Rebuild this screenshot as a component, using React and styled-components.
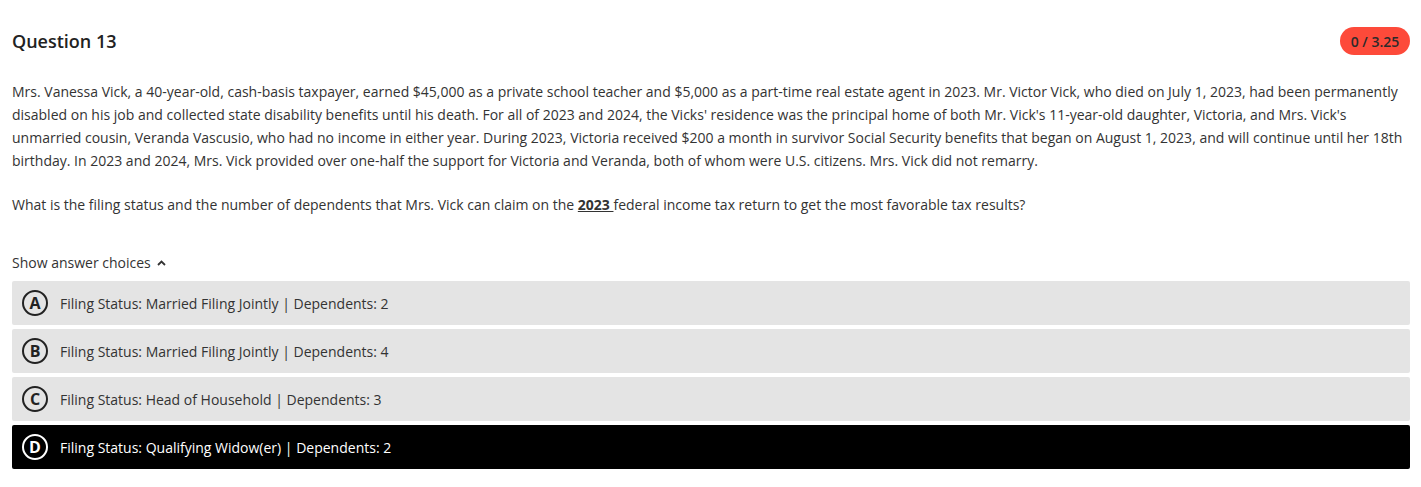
import React from 'react';
import styled, { createGlobalStyle } from 'styled-components';

const GlobalStyle = createGlobalStyle`
  body {
    margin: 0;
    background: #ffffff;
    font-family: 'Open Sans', 'Liberation Sans', sans-serif;
    color: #333333;
  }
`;

const Page = styled.div`
  padding: 27px 11px 0 12px;
`;

const HeaderRow = styled.div`
  display: flex;
  justify-content: space-between;
  align-items: center;
  height: 28px;
`;

const Title = styled.h2`
  margin: 0;
  font-size: 18px;
  font-weight: 600;
  color: #222222;
`;

const ScoreBadge = styled.span`
  display: inline-flex;
  align-items: center;
  justify-content: center;
  width: 70px;
  height: 28px;
  border-radius: 14px;
  background: #fd4a3a;
  color: #2b2b2b;
  font-size: 14px;
  font-weight: 600;
`;

const Paragraph = styled.p`
  margin: ${(p) => p.$top}px 0 0;
  font-size: 14px;
  line-height: 23px;
`;

const Strong = styled.strong`
  font-weight: 700;
  text-decoration: underline;
`;

const Toggle = styled.div`
  display: flex;
  align-items: center;
  gap: 6px;
  margin-top: 35px;
  font-size: 14px;
  line-height: 23px;
`;

const Choices = styled.div`
  display: flex;
  flex-direction: column;
  gap: 4px;
  margin-top: 7px;
`;

const Choice = styled.div`
  display: flex;
  align-items: center;
  gap: 12px;
  height: 44px;
  padding: 0 10px;
  border-radius: 2px;
  background: ${(p) => (p.$selected ? '#000000' : '#e4e4e4')};
  color: ${(p) => (p.$selected ? '#ffffff' : '#333333')};
  font-size: 14px;
`;

const Letter = styled.span`
  display: inline-flex;
  align-items: center;
  justify-content: center;
  width: 26px;
  height: 26px;
  box-sizing: border-box;
  border: 2px solid ${(p) => (p.$selected ? '#ffffff' : '#222222')};
  border-radius: 50%;
  font-size: 16px;
  line-height: 1;
  font-weight: 700;
  color: ${(p) => (p.$selected ? '#ffffff' : '#222222')};
`;

const choices = [
  { key: 'A', text: 'Filing Status: Married Filing Jointly | Dependents: 2' },
  { key: 'B', text: 'Filing Status: Married Filing Jointly | Dependents: 4' },
  { key: 'C', text: 'Filing Status: Head of Household | Dependents: 3' },
  { key: 'D', text: 'Filing Status: Qualifying Widow(er) | Dependents: 2', selected: true },
];

export default function App() {
  return (
    <Page>
      <GlobalStyle />
      <HeaderRow>
        <Title>Question 13</Title>
        <ScoreBadge>0 / 3.25</ScoreBadge>
      </HeaderRow>
      <Paragraph $top={25}>
        Mrs. Vanessa Vick, a 40-year-old, cash-basis taxpayer, earned $45,000 as a private school teacher and
        $5,000 as a part-time real estate agent in 2023. Mr. Victor Vick, who died on July 1, 2023, had been
        permanently disabled on his job and collected state disability benefits until his death. For all of 2023
        and 2024, the Vicks' residence was the principal home of both Mr. Vick's 11-year-old daughter, Victoria,
        and Mrs. Vick's unmarried cousin, Veranda Vascusio, who had no income in either year. During 2023,
        Victoria received $200 a month in survivor Social Security benefits that began on August 1, 2023, and
        will continue until her 18th birthday. In 2023 and 2024, Mrs. Vick provided over one-half the support for
        Victoria and Veranda, both of whom were U.S. citizens. Mrs. Vick did not remarry.
      </Paragraph>
      <Paragraph $top={21}>
        What is the filing status and the number of dependents that Mrs. Vick can claim on the{' '}
        <Strong>2023 </Strong>federal income tax return to get the most favorable tax results?
      </Paragraph>
      <Toggle>
        Show answer choices
        <svg width="9" height="6" viewBox="0 0 9 6" fill="none">
          <path d="M1 5L4.5 1.5L8 5" stroke="#333" strokeWidth="1.8" />
        </svg>
      </Toggle>
      <Choices>
        {choices.map((c) => (
          <Choice key={c.key} $selected={c.selected}>
            <Letter $selected={c.selected}>{c.key}</Letter>
            {c.text}
          </Choice>
        ))}
      </Choices>
    </Page>
  );
}
